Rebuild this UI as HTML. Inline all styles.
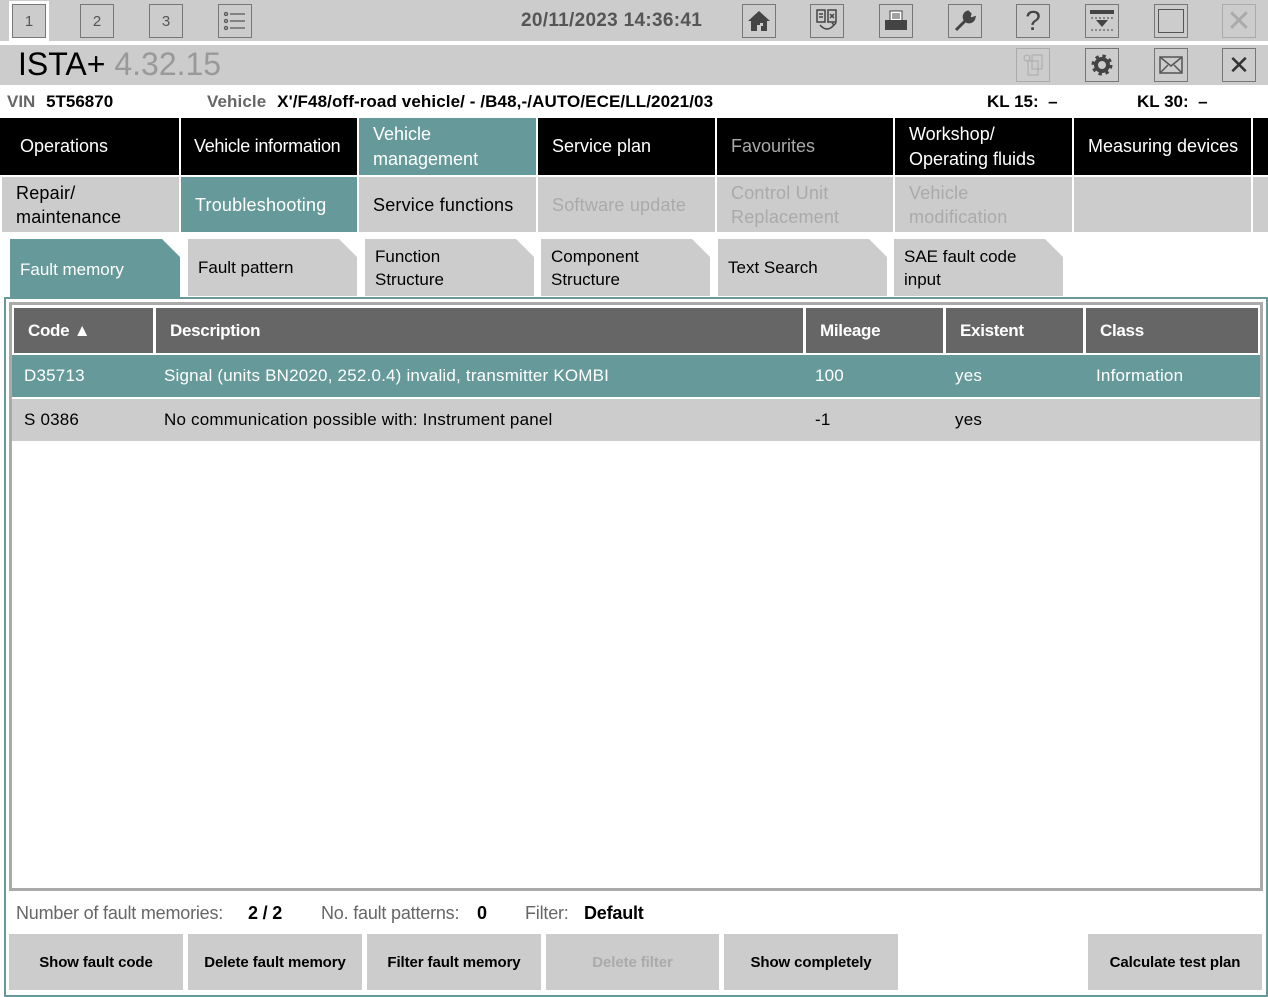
<!DOCTYPE html>
<html><head><meta charset="utf-8"><style>
*{box-sizing:border-box;margin:0;padding:0}
body{width:1268px;height:997px;background:#fff;font-family:"Liberation Sans",Arial,sans-serif;position:relative;overflow:hidden}
.a{position:absolute}
.ib{position:absolute;width:34px;height:34px;border:1px solid #777;background:#ccc;display:flex;align-items:center;justify-content:center;color:#555;font-size:15px}
.nav{position:absolute;top:118px;height:57px;background:#000;color:#fff;font-size:18px;padding:0 14px;display:flex;align-items:center;line-height:25px;white-space:nowrap;letter-spacing:0}
.sub{position:absolute;height:55px;background:#ccc;color:#000;font-size:18px;padding:0 14px;display:flex;align-items:center;line-height:24px;white-space:nowrap;letter-spacing:0.2px}
.tab{position:absolute;top:239px;height:57px;background:#ccc;font-size:17px;padding:0 10px;display:flex;align-items:center;line-height:23px;clip-path:polygon(0 0,calc(100% - 18px) 0,100% 18px,100% 100%,0 100%)}
.th{position:absolute;top:308px;height:45px;background:#666;color:#fff;font-weight:bold;font-size:17px;display:flex;align-items:center;padding-left:14px;letter-spacing:-0.3px}
.td{position:absolute;font-size:17px;display:flex;align-items:center;letter-spacing:0.2px}
.btn{position:absolute;top:934px;height:56px;background:#ccc;font-weight:bold;font-size:15px;display:flex;align-items:center;justify-content:center;letter-spacing:-0.1px}
.ft{position:absolute;top:903px;font-size:18px;color:#666;letter-spacing:-0.2px}
.ft b{color:#000}
</style></head><body>
<div class="a" style="left:0;top:0;width:1268px;height:41px;background:#ccc"></div>
<div class="a" style="left:0;top:45px;width:1268px;height:40px;background:#ccc"></div>
<div class="ib" style="left:12px;top:4px;outline:3px solid #fff">1</div>
<div class="ib" style="left:80px;top:4px">2</div>
<div class="ib" style="left:149px;top:4px">3</div>
<div class="ib" style="left:218px;top:4px"><svg width="26" height="24" viewBox="0 0 26 24" fill="none" stroke="#555" stroke-width="1.3"><circle cx="4" cy="5" r="1.5"/><circle cx="4" cy="12" r="1.5"/><circle cx="4" cy="19" r="1.5"/><path d="M8 5h15M8 12h15M8 19h15"/></svg></div>
<div class="a" style="left:521px;top:10px;font-size:19px;font-weight:bold;color:#555;letter-spacing:0.3px">20/11/2023 14:36:41</div>
<div class="ib" style="left:742px;top:4px"><svg width="24" height="24" viewBox="0 0 24 24"><path d="M12 2L1 12h3v10h6v-6h4v6h6V12h3z" fill="#444"/><rect x="13" y="14" width="3" height="3" fill="#ccc"/></svg></div>
<div class="ib" style="left:810px;top:4px"><svg width="26" height="28" viewBox="0 0 26 28" fill="none" stroke="#444" stroke-width="1.5"><rect x="3" y="3" width="8" height="12"/><rect x="14" y="3" width="8" height="12"/><path d="M5 7h4M5 10h4M16 7l4 4M20 7l-4 4M6 18q7 8 14 0M18 16l2 2 2-2"/></svg></div>
<div class="ib" style="left:879px;top:4px"><svg width="26" height="24" viewBox="0 0 26 24"><rect x="7" y="2" width="12" height="10" fill="#fff" stroke="#444"/><path d="M9 5h8M9 7h8M9 9h8" stroke="#444"/><rect x="2" y="11" width="22" height="10" fill="#444"/></svg></div>
<div class="ib" style="left:948px;top:4px"><svg width="26" height="26" viewBox="0 0 26 26"><path d="M4 22l11-11M16 4a5 5 0 1 0 6 6l-3 1-2-2 1-3z" stroke="#444" stroke-width="3" fill="#444"/></svg></div>
<div class="ib" style="left:1016px;top:4px;font-size:28px;color:#444">?</div>
<div class="ib" style="left:1085px;top:4px"><svg width="28" height="26" viewBox="0 0 28 26"><rect x="2" y="2" width="24" height="4" fill="#444"/><path d="M3 10h22M3 22h22" stroke="#444" stroke-dasharray="2 2"/><path d="M8 12h12l-6 7z" fill="#444"/></svg></div>
<div class="ib" style="left:1154px;top:4px"><div style="width:26px;height:24px;border:1.5px solid #555"></div></div>
<div class="ib" style="left:1222px;top:4px;border-color:#aaa;color:#aaa;font-size:30px">✕</div>
<div class="a" style="left:18px;top:46px;font-size:32px;color:#000">ISTA+ <span style="color:#999">4.32.15</span></div>
<div class="ib" style="left:1016px;top:48px;border-color:#aaa"><svg width="26" height="26" viewBox="0 0 26 26" fill="none" stroke="#aaa"><circle cx="7" cy="6" r="3"/><rect x="12" y="3" width="10" height="14"/><rect x="8" y="9" width="10" height="14"/></svg></div>
<div class="ib" style="left:1085px;top:48px"><svg width="26" height="26" viewBox="0 0 26 26"><circle cx="13" cy="13" r="8" fill="none" stroke="#444" stroke-width="5" stroke-dasharray="3 3.3"/><circle cx="13" cy="13" r="6" fill="none" stroke="#444" stroke-width="4"/></svg></div>
<div class="ib" style="left:1154px;top:48px"><svg width="26" height="22" viewBox="0 0 26 22" fill="none" stroke="#555" stroke-width="1.5"><rect x="2" y="3" width="22" height="16"/><path d="M2 3l11 9 11-9M2 19l8-8M24 19l-8-8"/></svg></div>
<div class="ib" style="left:1222px;top:48px;color:#333;font-size:26px">✕</div>
<div class="a" style="left:7px;top:92px;font-size:17px;font-weight:bold;color:#666">VIN <span style="color:#000;margin-left:6px">5T56870</span></div>
<div class="a" style="left:207px;top:92px;font-size:17px;font-weight:bold;color:#666;letter-spacing:0.1px">Vehicle <span style="color:#000;margin-left:6px">X'/F48/off-road vehicle/ - /B48,-/AUTO/ECE/LL/2021/03</span></div>
<div class="a" style="left:987px;top:92px;font-size:17px;font-weight:bold">KL 15:&nbsp; –</div>
<div class="a" style="left:1137px;top:92px;font-size:17px;font-weight:bold">KL 30:&nbsp; –</div>
<div class="a" style="left:0;top:118px;width:1268px;height:57px;background:#000"></div>
<div class="nav" style="left:0;width:179px;padding-left:20px">Operations</div>
<div class="nav" style="left:181px;width:176px;letter-spacing:-0.3px;padding-left:13px">Vehicle information</div>
<div class="nav" style="left:359px;width:177px;background:#699">Vehicle<br>management</div>
<div class="nav" style="left:538px;width:177px">Service plan</div>
<div class="nav" style="left:717px;width:176px;color:#aaa">Favourites</div>
<div class="nav" style="left:895px;width:177px">Workshop/<br>Operating fluids</div>
<div class="nav" style="left:1074px;width:177px">Measuring devices</div>
<div class="a" style="left:179px;top:118px;width:2px;height:57px;background:#fff"></div>
<div class="a" style="left:357px;top:118px;width:2px;height:57px;background:#fff"></div>
<div class="a" style="left:536px;top:118px;width:2px;height:57px;background:#fff"></div>
<div class="a" style="left:715px;top:118px;width:2px;height:57px;background:#fff"></div>
<div class="a" style="left:893px;top:118px;width:2px;height:57px;background:#fff"></div>
<div class="a" style="left:1072px;top:118px;width:2px;height:57px;background:#fff"></div>
<div class="a" style="left:1251px;top:118px;width:2px;height:57px;background:#fff"></div>
<div class="sub" style="left:2px;top:177px;width:177px">Repair/<br>maintenance</div>
<div class="sub" style="left:181px;top:177px;width:176px;background:#699;color:#fff">Troubleshooting</div>
<div class="sub" style="left:359px;top:177px;width:177px">Service functions</div>
<div class="sub" style="left:538px;top:177px;width:177px;color:#aaa">Software update</div>
<div class="sub" style="left:717px;top:177px;width:176px;color:#aaa">Control Unit<br>Replacement</div>
<div class="sub" style="left:895px;top:177px;width:177px;color:#aaa">Vehicle<br>modification</div>
<div class="sub" style="left:1074px;top:177px;width:177px"></div>
<div class="sub" style="left:1253px;top:177px;width:15px"></div>
<div class="tab" style="left:10px;width:170px;height:60px;background:#699;color:#fff">Fault memory</div>
<div class="tab" style="left:188px;width:169px">Fault pattern</div>
<div class="tab" style="left:365px;width:169px">Function<br>Structure</div>
<div class="tab" style="left:541px;width:169px">Component<br>Structure</div>
<div class="tab" style="left:718px;width:169px">Text Search</div>
<div class="tab" style="left:894px;width:169px">SAE fault code<br>input</div>
<div class="a" style="left:4px;top:297px;width:1264px;height:700px;border:2px solid #699"></div>
<div class="a" style="left:9px;top:302px;width:1254px;height:589px;border:3px solid #aaa"></div>
<div class="th" style="left:14px;width:139px">Code ▲</div>
<div class="th" style="left:156px;width:647px">Description</div>
<div class="th" style="left:806px;width:137px">Mileage</div>
<div class="th" style="left:946px;width:137px">Existent</div>
<div class="th" style="left:1086px;width:172px">Class</div>
<div class="a" style="left:12px;top:355px;width:1248px;height:42px;background:#699"></div>
<div class="a" style="left:12px;top:399px;width:1248px;height:42px;background:#ccc"></div>
<div class="td" style="left:24px;top:355px;height:42px;color:#fff">D35713</div>
<div class="td" style="left:164px;top:355px;height:42px;color:#fff">Signal (units BN2020, 252.0.4) invalid, transmitter KOMBI</div>
<div class="td" style="left:815px;top:355px;height:42px;color:#fff">100</div>
<div class="td" style="left:955px;top:355px;height:42px;color:#fff">yes</div>
<div class="td" style="left:1096px;top:355px;height:42px;color:#fff">Information</div>
<div class="td" style="left:24px;top:399px;height:42px">S 0386</div>
<div class="td" style="left:164px;top:399px;height:42px">No communication possible with: Instrument panel</div>
<div class="td" style="left:815px;top:399px;height:42px">-1</div>
<div class="td" style="left:955px;top:399px;height:42px">yes</div>
<div class="ft" style="left:16px">Number of fault memories:</div>
<div class="ft" style="left:248px"><b>2 / 2</b></div>
<div class="ft" style="left:321px">No. fault patterns:</div>
<div class="ft" style="left:477px"><b>0</b></div>
<div class="ft" style="left:525px">Filter:</div>
<div class="ft" style="left:584px"><b>Default</b></div>
<div class="btn" style="left:9px;width:174px">Show fault code</div>
<div class="btn" style="left:188px;width:174px">Delete fault memory</div>
<div class="btn" style="left:367px;width:174px">Filter fault memory</div>
<div class="btn" style="left:546px;width:173px;color:#aaa">Delete filter</div>
<div class="btn" style="left:724px;width:174px">Show completely</div>
<div class="btn" style="left:1088px;width:174px">Calculate test plan</div>
</body></html>
